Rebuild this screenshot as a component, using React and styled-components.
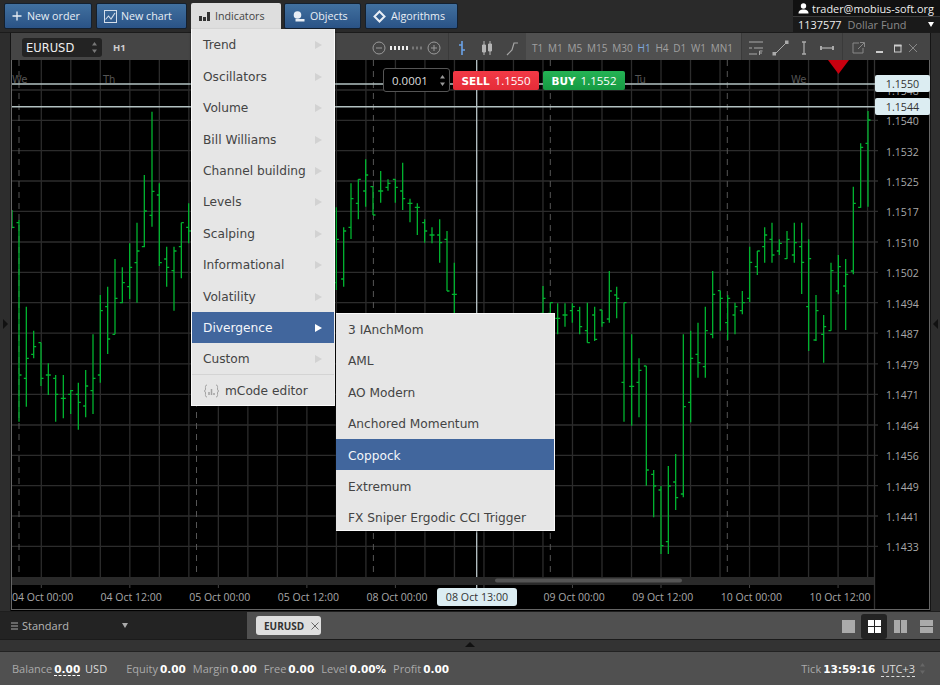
import React from 'react'
import styled, { createGlobalStyle } from 'styled-components'

const GlobalStyle = createGlobalStyle`
  html, body { margin: 0; padding: 0; overflow: hidden; background: #2b2b2b; }
  * { box-sizing: border-box; }
  body { font-family: "DejaVu Sans", Verdana, sans-serif; }
`

const NARROW = '"Open Sans", "DejaVu Sans", sans-serif'

// bars are [x, high, low, open, close], read at 3x, each group has its own origin
const barGroups = [
  { ox: 0, oy: 100, bars: [
    [36,330,385,333,382],[57,360,965,368,825],[79,620,920,835,775],[101,692,775,763,740],[123,728,858,728,835],
    [145,790,885,825,825],[167,825,965,835,883],[190,825,955,895,895],[212,870,942,883,872],[235,848,989,883,907],
    [257,810,952,918,858],[279,703,942,872,835],[301,585,848,825,632],[323,560,762,620,717],[345,477,703,703,595],
    [367,502,610,608,548],[389,430,597,560,502],[411,368,608,488,453],[433,225,442,440,333],[456,35,380,346,274],
    [478,250,498,285,488],[500,440,560,477,502],[522,440,632,512,453],[544,368,535,440,368],[566,310,430,382,393],
  ] },
  { ox: 190, oy: 100, bars: [
    [439,322,570,548,418],[461,382,560,537,393],[483,250,417,382,296],[505,238,358,310,238],[527,178,320,273,225],
    [549,260,345,260,345],[572,213,308,273,273],[594,238,272,262,250],[616,238,308,238,262],[638,188,330,273,296],
    [660,296,367,310,310],[682,310,405,322,322],[704,358,428,368,393],[726,382,430,405,405],[749,358,488,405,428],
    [771,393,573,418,573],[793,488,800,583,583],
  ] },
  { ox: 540, oy: 100, bars: [
    [9,558,800,640,595],[31,608,800,640,608],[53,610,703,655,655],[75,610,680,645,645],[97,610,668,632,620],
    [119,620,703,632,680],[142,608,728,692,728],[164,620,723,645,718],[186,630,680,630,668],[208,513,668,657,573],
    [230,560,655,585,595],[252,608,965,847,608],[275,703,977,859,859],[297,775,952,847,811],[319,798,1157,798,1110],
    [341,1110,1252,1123,1158],[363,1158,1362,1170,1337],[385,1098,1362,1325,1158],[407,1062,1230,1146,1193],[430,703,1192,1182,920],
    [452,692,967,907,775],[474,668,833,763,788],[496,620,833,800,692],[518,513,715,703,583],[541,572,692,572,595],
    [563,585,720,668,595],[585,608,703,645,620],[607,573,643,632,608],[629,440,607,595,487],[652,453,525,500,453],
    [674,382,488,440,405],[696,368,488,418,465],[718,418,465,453,430],[741,393,477,476,418],[763,368,488,465,428],
    [785,368,582,440,487],[806,418,753,620,476],[828,585,723,720,632],[851,645,788,703,680],[873,488,692,692,512],
    [895,465,583,573,500],[917,477,690,558,523],[940,260,523,513,310],[962,130,323,322,142],[984,33,320,130,60],
  ] },
]

const priceRows = [
  ['1.1548', 90], ['1.1540', 120.3], ['1.1532', 150.7], ['1.1525', 181], ['1.1517', 211.4], ['1.1510', 242],
  ['1.1502', 272.3], ['1.1494', 302.7], ['1.1487', 333.2], ['1.1479', 363.8], ['1.1471', 394.3], ['1.1464', 425],
  ['1.1456', 455.3], ['1.1449', 485.7], ['1.1441', 516], ['1.1433', 546.3],
]
const dateLabels = ['04 Oct 00:00', '04 Oct 12:00', '05 Oct 00:00', '05 Oct 12:00', '08 Oct 00:00', '', '09 Oct 00:00', '09 Oct 12:00', '10 Oct 00:00', '10 Oct 12:00']
const dayLabels = [['We', 12], ['Th', 103], ['Tu', 635], ['We', 791]]
const separators = [19, 196.5, 373.4, 550.3, 727.3]
const gridX = Array.from({ length: 29 }, (_, i) => 41.3 + 29.51 * i)

const timeframes = ['T1', 'M1', 'M5', 'M15', 'M30', 'H1', 'H4', 'D1', 'W1', 'MN1']
const accountStats = [['Equity', '0.00'], ['Margin', '0.00'], ['Free', '0.00'], ['Level', '0.00%'], ['Profit', '0.00']]
const indicatorItems = ['Trend', 'Oscillators', 'Volume', 'Bill Williams', 'Channel building', 'Levels', 'Scalping', 'Informational', 'Volatility', 'Divergence', 'Custom']
const divergenceItems = ['3 IAnchMom', 'AML', 'AO Modern', 'Anchored Momentum', 'Coppock', 'Extremum', 'FX Sniper Ergodic CCI Trigger']

const Page = styled.div`
  width: 940px;
  height: 685px;
  display: flex;
  flex-direction: column;
  overflow: hidden;
  background: #2b2b2b;
`

const TopBar = styled.div`
  height: 33px;
  display: flex;
  padding: 3px 0 0 4px;
  gap: 4px;
  background: #2a2a2a;
  border-bottom: 1px solid #1b1b1b;
  position: relative;
  z-index: 5;
`

const NavButton = styled.div`
  width: ${p => p.$w}px;
  height: 26px;
  display: flex;
  align-items: center;
  gap: ${p => p.$gap || 5}px;
  padding-left: ${p => p.$pad || 7}px;
  font-family: ${NARROW};
  font-size: 10.7px;
  color: #e8eef5;
  background: linear-gradient(#41709f, #2a5386);
  border: 1px solid #14202e;
  border-radius: 2px;
  white-space: nowrap;
`

const IndicatorsTab = styled.div`
  position: relative;
  width: 90px;
  height: 26px;
  margin-right: -1px;
  display: flex;
  align-items: center;
  gap: 5px;
  padding-left: 8px;
  font-family: ${NARROW};
  font-size: 10.7px;
  color: #444;
  background: #dedede;
  border-radius: 2px 2px 0 0;
`

const Menu = styled.div`
  position: absolute;
  left: 0;
  top: 26px;
  width: 144px;
  padding: 0;
  font-family: "DejaVu Sans", Verdana, sans-serif;
  background: #e6e6e6;
  border: 1px solid #fafafa;
  border-top: 0;
  box-shadow: 0 1px 2px rgba(0, 0, 0, 0.6);
  z-index: 10;
`

const MenuRow = styled.div`
  position: relative;
  height: 31.4px;
  display: flex;
  align-items: center;
  justify-content: space-between;
  padding: 1.5px 12px 0 11px;
  font-size: 12.2px;
  white-space: nowrap;
  color: ${p => (p.$active ? '#f4f6fa' : '#444')};
  background: ${p => (p.$active ? '#41669d' : 'transparent')};
`

const EditorRow = styled(MenuRow)`
  justify-content: flex-start;
  gap: 5px;
  height: 30.5px;
  border-top: 1px solid #d4d4d4;
`

const Caret = styled.span`
  width: 0;
  height: 0;
  border-left: 7px solid ${p => (p.$active ? '#fff' : '#d2d2d2')};
  border-top: 4px solid transparent;
  border-bottom: 4px solid transparent;
`

const SubMenu = styled.div`
  position: absolute;
  left: 144px;
  top: 1px;
  width: 219px;
  height: 218px;
  overflow: hidden;
  background: #e6e6e6;
  border: 1px solid #fafafa;
  border-left: 0;
  box-shadow: 0 1px 2px rgba(0, 0, 0, 0.6);
`

const SubRow = styled(MenuRow)`
  padding-left: 12px;
`

const Account = styled.div`
  margin-left: auto;
  margin-top: -3px;
  width: 147px;
  height: 32px;
  background: #1a1a1a;
  font-family: ${NARROW};
  font-size: 10.9px;
  color: #eee;
`

const AccountUser = styled.div`
  height: 16px;
  display: flex;
  align-items: center;
  gap: 3px;
  padding-left: 5px;
  background: #111;
  white-space: nowrap;
`

const AccountFund = styled.div`
  height: 16px;
  display: flex;
  align-items: center;
  gap: 6px;
  padding: 0 6px 0 5px;
  border-top: 1px solid #3a3a3a;
  white-space: nowrap;
`

const FundName = styled.span`
  color: #8a8a8a;
  flex: 1;
`

const DownMark = styled.span`
  width: 0;
  height: 0;
  border-top: 5px solid ${p => p.$color || '#fff'};
  border-left: 3.5px solid transparent;
  border-right: 3.5px solid transparent;
`

const Workspace = styled.div`
  height: 578px;
  display: flex;
`

const SideStrip = styled.div`
  width: ${p => p.$w}px;
  display: flex;
  align-items: center;
  justify-content: center;
  padding-top: 4px;
  background: #2d2d2d;
  border-${p => p.$edge}: 1px solid #141414;
`

const SideArrow = styled.span`
  width: 0;
  height: 0;
  border-top: 5px solid transparent;
  border-bottom: 5px solid transparent;
  border-${p => p.$dir}: 5px solid #111;
`

const ChartWindow = styled.div`
  flex: 1;
  display: flex;
  flex-direction: column;
  min-width: 0;
`

const ChartToolbar = styled.div`
  height: 27px;
  display: flex;
  background: #454545;
`

const ToolGroup = styled.div`
  width: ${p => p.$w}px;
  height: 100%;
  display: flex;
  align-items: center;
  gap: ${p => p.$gap || 0}px;
  padding: 2px 0 0 ${p => p.$pad || 0}px;
  background: ${p => p.$bg || 'transparent'};
  border-left: ${p => (p.$line ? '1px solid #3a3a3a' : '0')};
`

const SymbolSelect = styled.div`
  width: 80px;
  height: 19px;
  display: flex;
  align-items: center;
  justify-content: space-between;
  padding: 0 4px;
  margin-right: 11px;
  font-size: 11.5px;
  color: #eee;
  background: #232323;
  border-radius: 3px;
`

const PeriodLabel = styled.span`
  font-family: ${NARROW};
  font-size: 9.5px;
  font-weight: bold;
  color: #cfcfcf;
`

const Timeframe = styled.span`
  font-family: ${NARROW};
  font-size: 10px;
  color: ${p => (p.$active ? '#7fa9dc' : '#a0a0a0')};
`

const ChartArea = styled.div`
  position: relative;
  flex: 1;
  background: #000;
`

const ChartSvg = styled.svg`
  display: block;
`

const OrderPanel = styled.div`
  position: absolute;
  left: 372px;
  top: 8px;
  display: flex;
  align-items: center;
  gap: 3px;
`

const StepInput = styled.div`
  width: 67px;
  height: 24px;
  display: flex;
  align-items: center;
  justify-content: space-between;
  padding: 0 3px 0 8px;
  font-family: ${NARROW};
  font-size: 11.5px;
  color: #ddd;
  background: #000;
  border: 1px solid #555;
  border-radius: 3px;
`

const TradeButton = styled.div`
  width: ${p => p.$w}px;
  height: 19px;
  display: flex;
  align-items: baseline;
  justify-content: center;
  gap: 5px;
  padding-top: 2px;
  margin-right: ${p => p.$mr || 0}px;
  font-family: ${NARROW};
  font-size: 11.5px;
  line-height: 15px;
  color: #fff;
  background: ${p => p.$bg};
  border-radius: 2px;
  b { font-family: "DejaVu Sans", sans-serif; font-size: 10.5px; }
`

const PriceTag = styled.div`
  position: absolute;
  left: 864px;
  top: ${p => p.$top}px;
  width: 55px;
  height: 17px;
  display: flex;
  align-items: center;
  justify-content: center;
  font-family: ${NARROW};
  font-size: 10.7px;
  color: #333;
  background: #dcedf2;
  border-radius: 2px;
`

const DateTag = styled(PriceTag)`
  left: 426px;
  width: 80px;
  height: 18px;
  border-radius: 3px;
`

const BottomTabs = styled.div`
  height: 29px;
  display: flex;
  background: #505050;
  border-top: 1px solid #1e1e1e;
  border-bottom: 1px solid #1b1b1b;
`

const LayoutPicker = styled.div`
  width: 247px;
  display: flex;
  align-items: center;
  padding-left: 11px;
  gap: 4px;
  font-family: ${NARROW};
  font-size: 11px;
  color: #b5b5b5;
  background: #232323;
`

const PresetName = styled.span`
  flex: 0 0 96px;
`

const SymbolTab = styled.div`
  margin: 4px 0 0 9px;
  width: 65px;
  height: 19px;
  display: flex;
  align-items: center;
  gap: 7px;
  padding-left: 8px;
  font-family: ${NARROW};
  font-size: 10px;
  font-weight: bold;
  color: #333;
  background: #dedede;
  border-radius: 3px;
`

const SplitButtons = styled.div`
  margin-left: auto;
  display: flex;
  align-items: center;
  padding: 1px 1px 0 0;
`

const SplitButton = styled.div`
  width: 26px;
  height: 25px;
  display: flex;
  align-items: center;
  justify-content: center;
  border-radius: 3px;
  background: ${p => (p.$active ? '#232323' : 'transparent')};
`

const Divider = styled.div`
  height: 12px;
  display: flex;
  justify-content: center;
  padding-top: 2px;
  background: #333;
  border-bottom: 1px solid #222;
`

const UpMark = styled.span`
  width: 0;
  height: 0;
  border-bottom: 5px solid #111;
  border-left: 5px solid transparent;
  border-right: 5px solid transparent;
`

const StatusBar = styled.div`
  flex: 1;
  display: flex;
  align-items: center;
  padding: 0 14px 0 12px;
  font-family: ${NARROW};
  font-size: 11px;
  color: #aaa;
  background: #505050;
`

const Stat = styled.span`
  margin-right: ${p => p.$mr || 7}px;
  white-space: nowrap;
`

const StatValue = styled.b`
  margin-left: 2px;
  font-family: "DejaVu Sans", sans-serif;
  font-size: 10.5px;
  color: #fff;
  border-bottom: ${p => (p.$dashed ? '1px dashed #fff' : '0')};
`

const Plain = styled.span`
  margin-left: 2px;
  color: #ddd;
  border-bottom: ${p => (p.$dashed ? '1px dashed #ddd' : '0')};
`

const Clock = styled.div`
  margin-left: auto;
  display: flex;
  align-items: center;
  gap: 4px;
  white-space: nowrap;
`

const Spin = ({ color = '#777' }) => (
  <svg width="7" height="13" viewBox="0 0 7 13">
    <path d="M3.5 1 6 4.5H1zM3.5 12 1 8.5H6z" fill={color} />
  </svg>
)

const Plus = () => (
  <svg width="10" height="10" viewBox="0 0 10 10">
    <path d="M5 .5v9M.5 5h9" stroke="#e8eef5" strokeWidth="1.3" />
  </svg>
)

const ChartIcon = () => (
  <svg width="13" height="13" viewBox="0 0 13 13" fill="none" stroke="#d5dfeb">
    <rect x=".5" y=".5" width="12" height="12" />
    <path d="M1.5 9.500 4.500 6l2.500 3L11 3" strokeWidth="1.100" />
  </svg>
)

const BarsIcon = () => (
  <svg width="11" height="10" viewBox="0 0 11 10" fill="#333">
    <path d="M0 5h3v5H0zM4 6h3v4H4zM8 1h3v9H8z" />
  </svg>
)

const ObjectsIcon = () => (
  <svg width="12" height="12" viewBox="0 0 12 12" fill="#e8eef5">
    <circle cx="4.500" cy="5" r="3.800" />
    <path d="M2.500 9h9v2.500h-9z" />
  </svg>
)

const DiamondIcon = () => (
  <svg width="13" height="13" viewBox="0 0 13 13" fill="none" stroke="#e8eef5" strokeWidth="2">
    <path d="M6.500 1.500 11.500 6.500 6.500 11.500 1.500 6.500z" />
  </svg>
)

const UserIcon = () => (
  <svg width="11" height="11" viewBox="0 0 11 11" fill="#fff">
    <circle cx="5.500" cy="3" r="2.700" />
    <path d="M.5 10.500c0-3 2-4 5-4s5 1 5 4z" />
  </svg>
)

const EditorIcon = () => (
  <svg width="17" height="14" viewBox="0 0 17 14" fill="none" stroke="#a3a3a3">
    <path d="M4 1C2 1 2.500 3 2.500 5S1 7 1 7s1.500 0 1.500 2-.5 4 1.500 4M13 1c2 0 1.500 2 1.500 4S16 7 16 7s-1.500 0-1.500 2 .5 4-1.500 4" />
    <path d="M6 8v3M8.500 5v6M11 9v2" strokeWidth="1.500" />
  </svg>
)

const ZoomControl = () => (
  <svg width="70" height="14" viewBox="0 0 70 14" fill="none" stroke="#9a9a9a">
    <circle cx="7" cy="7" r="6" />
    <path d="M4 7h6M59 7h6M62 4v6" />
    <circle cx="62" cy="7" r="6" />
    <path d="M19 5v4M23 5v4M27 5v4M31 5v4M35 5v4" stroke="#eee" strokeWidth="2" />
    <path d="M41 5.500v3M45 5.500v3M49 5.500v3" stroke="#777" strokeWidth="2" />
  </svg>
)

const ChartTypes = () => (
  <svg width="64" height="16" viewBox="0 0 64 16" fill="none">
    <path d="M7 1v14M4 5h3M7 10h3" stroke="#6ba2e6" strokeWidth="1.600" />
    <path d="M29 1v14M35 1v14" stroke="#b5b5b5" />
    <path d="M27.500 5h3v7h-3zM33.500 4h3v7h-3z" stroke="#b5b5b5" fill="#b5b5b5" />
    <path d="M52 15 57 10l2-7h4" stroke="#a5a5a5" strokeWidth="1.200" />
  </svg>
)

const DrawTools = () => (
  <svg width="90" height="16" viewBox="0 0 90 16" fill="none" stroke="#aaa">
    <path d="M0 2h14M5 8h9M0 14h8M0 8h3" />
    <path d="M10.500 11v4M10.500 11h3M10.500 13h2.500" />
    <path d="M26 14 37 3" />
    <rect x="24" y="12.500" width="2.500" height="2.500" fill="#aaa" />
    <rect x="36.500" y="1" width="2.500" height="2.500" fill="#aaa" />
    <path d="M55 2v12" strokeWidth="1.300" />
    <path d="M53 2h4M53 14h4" strokeWidth="1.500" />
    <path d="M72 8h12" strokeWidth="1.300" />
    <path d="M72 6v4M84 6v4" strokeWidth="2" />
  </svg>
)

const WindowButtons = () => (
  <svg width="66" height="14" viewBox="0 0 66 14" fill="none" stroke="#888">
    <path d="M7 2H1v10h10V7M6 8l6-6M8 1.500h4.500V6" />
    <path d="M24 11h7" stroke="#ccc" strokeWidth="2" />
    <rect x="42.500" y="4.500" width="6.500" height="6.500" stroke="#ccc" />
    <path d="M42 4.500h7.500" stroke="#ccc" strokeWidth="2" />
    <path d="M57 3l8 8M65 3l-8 8" />
  </svg>
)

const HamburgerIcon = () => (
  <svg width="7" height="8" viewBox="0 0 7 8" stroke="#aaa" strokeWidth="1.200">
    <path d="M0 1h7M0 4h7M0 7h7" />
  </svg>
)

const CloseIcon = () => (
  <svg width="8" height="8" viewBox="0 0 8 8" stroke="#666">
    <path d="M.5 .5l7 7M7.500 .5l-7 7" />
  </svg>
)

const SplitIcon = ({ kind, color }) => {
  const shapes = {
    single: 'M0 0h13v13H0z',
    grid: 'M0 0h6v6H0zM7 0h6v6H7zM0 7h6v6H0zM7 7h6v6H7z',
    columns: 'M0 0h6v13H0zM7 0h6v13H7z',
    rows: 'M0 0h13v6H0zM0 7h13v6H0z',
  }
  return (
    <svg width="13" height="13" viewBox="0 0 13 13">
      <path d={shapes[kind]} fill={color} />
    </svg>
  )
}

const BarSeries = () => (
  <g stroke="#00b32f" strokeWidth="1.300" fill="none">
    {barGroups.map(group =>
      group.bars.map(([x, high, low, open, close]) => {
        const px = group.ox + x / 3
        const py = v => group.oy + v / 3
        return (
          <path
            key={`${group.ox}-${x}`}
            d={`M${px} ${py(high)}V${py(low)}M${px - 2.5} ${py(open)}H${px}M${px} ${py(close)}H${px + 2.5}`}
          />
        )
      })
    )}
  </g>
)

const Chart = () => (
  <ChartSvg width="919" height="550" viewBox="11 60 919 550">
    <g stroke="#2c2c2c" strokeWidth="1.300">
      {priceRows.map(([label, y]) => (
        <path key={label} d={`M12 ${y}H878`} />
      ))}
      {gridX.map(x => (
        <path key={x} d={`M${x} 60V577`} />
      ))}
      <path d="M874.5 60V610" stroke="#333" />
    </g>
    <g stroke="#555" strokeDasharray="6 5">
      {separators.map(x => (
        <path key={x} d={`M${x} 60V577`} />
      ))}
    </g>
    <BarSeries />
    <g fontFamily="DejaVu Sans, sans-serif" fontSize="10" fill="#555">
      {dayLabels.map(([label, x]) => (
        <text key={x} x={x} y="83">{label}</text>
      ))}
    </g>
    <g fontFamily="Open Sans, sans-serif" fontSize="10.5" fill="#a8a8a8">
      {priceRows.map(([label, y]) => (
        <text key={label} x="886" y={y + 5}>{label}</text>
      ))}
      {dateLabels.map((label, i) => (
        <text key={i} x={12 + 88.6 * i} y="601">{label}</text>
      ))}
    </g>
    <path d="M476.7 60V588" stroke="#b9c6c9" strokeWidth="1.300" />
    <path d="M12 84H875M12 106.7H875" stroke="#b3c2c2" strokeWidth="1.500" />
    <path d="M828 60h21l-10.500 14z" fill="#c8000f" />
    <path d="M12 577h862v8H12z" fill="#2a2a2a" />
    <rect x="495" y="578.5" width="187" height="4" rx="2" fill="#555" />
    <g stroke="#444">
      {gridX.filter((_, i) => i % 3 === 0).map(x => (
        <path key={x} d={`M${x} 585V588`} />
      ))}
    </g>
    <path d="M11.5 60V610M929.5 60V610M11 609.5H930" stroke="#666" />
  </ChartSvg>
)

export default function App() {
  return (
    <Page>
      <GlobalStyle />
      <TopBar>
        <NavButton $w={88} $pad={7}><Plus />New order</NavButton>
        <NavButton $w={91} $pad={7} $gap={4}><ChartIcon />New chart</NavButton>
        <IndicatorsTab>
          <BarsIcon />Indicators
          <Menu>
            {indicatorItems.map(item => (
              <MenuRow key={item} $active={item === 'Divergence'}>
                {item}
                <Caret $active={item === 'Divergence'} />
                {item === 'Divergence' && (
                  <SubMenu>
                    {divergenceItems.map(sub => (
                      <SubRow key={sub} $active={sub === 'Coppock'}>{sub}</SubRow>
                    ))}
                  </SubMenu>
                )}
              </MenuRow>
            ))}
            <EditorRow><EditorIcon />mCode editor</EditorRow>
          </Menu>
        </IndicatorsTab>
        <NavButton $w={77} $pad={8}><ObjectsIcon />Objects</NavButton>
        <NavButton $w={93} $pad={7}><DiamondIcon />Algorithms</NavButton>
        <Account>
          <AccountUser><UserIcon />trader@mobius-soft.org</AccountUser>
          <AccountFund>1137577<FundName>Dollar Fund</FundName><DownMark /></AccountFund>
        </Account>
      </TopBar>

      <Workspace>
        <SideStrip $w={11} $edge="right"><SideArrow $dir="left" /></SideStrip>
        <ChartWindow>
          <ChartToolbar>
            <ToolGroup $w={355} $pad={11}>
              <SymbolSelect>EURUSD<Spin /></SymbolSelect>
              <PeriodLabel>H1</PeriodLabel>
            </ToolGroup>
            <ToolGroup $w={82} $pad={6}><ZoomControl /></ToolGroup>
            <ToolGroup $w={78} $pad={6} $line><ChartTypes /></ToolGroup>
            <ToolGroup $w={215} $pad={6} $gap={4.8} $bg="#505050">
              {timeframes.map(tf => (
                <Timeframe key={tf} $active={tf === 'H1'}>{tf}</Timeframe>
              ))}
            </ToolGroup>
            <ToolGroup $w={101} $pad={7} $line><DrawTools /></ToolGroup>
            <ToolGroup $w={88} $pad={9} $line><WindowButtons /></ToolGroup>
          </ChartToolbar>
          <ChartArea>
            <Chart />
            <OrderPanel>
              <StepInput>0.0001<Spin color="#999" /></StepInput>
              <TradeButton $w={86} $bg="linear-gradient(#f23a46, #e52c38)" $mr={1}><b>SELL</b>1.1550</TradeButton>
              <TradeButton $w={82} $bg="linear-gradient(#25b355, #159a42)"><b>BUY</b>1.1552</TradeButton>
            </OrderPanel>
            <PriceTag $top={15}>1.1550</PriceTag>
            <PriceTag $top={38}>1.1544</PriceTag>
            <DateTag $top={528}>08 Oct 13:00</DateTag>
          </ChartArea>
        </ChartWindow>
        <SideStrip $w={10} $edge="left"><SideArrow $dir="right" /></SideStrip>
      </Workspace>

      <BottomTabs>
        <LayoutPicker>
          <HamburgerIcon />
          <PresetName>Standard</PresetName>
          <DownMark $color="#aaa" />
        </LayoutPicker>
        <SymbolTab>EURUSD<CloseIcon /></SymbolTab>
        <SplitButtons>
          <SplitButton><SplitIcon kind="single" color="#aaa" /></SplitButton>
          <SplitButton $active><SplitIcon kind="grid" color="#fff" /></SplitButton>
          <SplitButton><SplitIcon kind="columns" color="#aaa" /></SplitButton>
          <SplitButton><SplitIcon kind="rows" color="#aaa" /></SplitButton>
        </SplitButtons>
      </BottomTabs>

      <Divider><UpMark /></Divider>

      <StatusBar>
        <Stat $mr={19}>Balance<StatValue $dashed>0.00</StatValue> <Plain>USD</Plain></Stat>
        {accountStats.map(([label, value]) => (
          <Stat key={label}>{label}<StatValue>{value}</StatValue></Stat>
        ))}
        <Clock>
          <span>Tick<StatValue>13:59:16</StatValue></span>
          <Plain $dashed>UTC+3</Plain>
          <Spin color="#666" />
        </Clock>
      </StatusBar>
    </Page>
  )
}
